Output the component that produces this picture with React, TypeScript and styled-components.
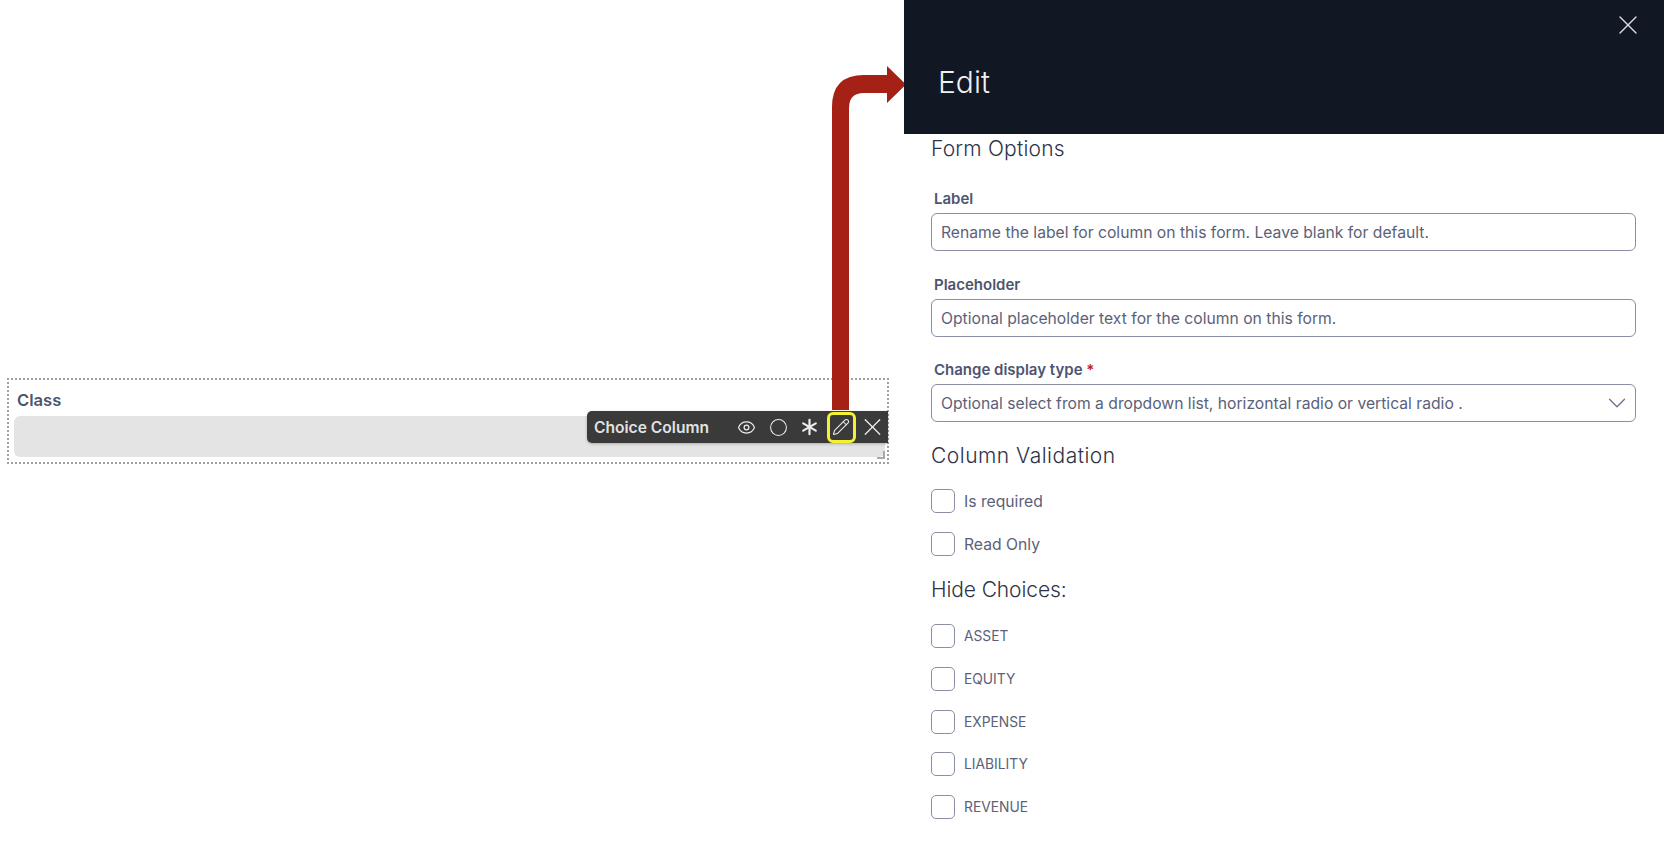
import React from 'react';
import styled, { createGlobalStyle } from 'styled-components';
import { ChevronDown, X, Eye, Circle, Asterisk, Pencil } from 'lucide-react';

const GlobalStyle = createGlobalStyle`
  html, body {
    margin: 0;
    padding: 0;
    background: #ffffff;
    font-family: 'Inter', 'Open Sans', sans-serif;
  }
  * {
    box-sizing: border-box;
  }
`;

const Page = styled.div`
  position: relative;
  display: flex;
  width: 1680px;
  height: 846px;
  overflow: hidden;
`;

const Canvas = styled.div`
  width: 904px;
  padding: 378px 15px 0 7px;
`;

const ColumnBox = styled.div`
  position: relative;
  height: 86px;
  border: 2px dotted #a0a0a0;
  padding: 10px 2px 0 5px;
`;

const ColumnLabel = styled.div`
  font-size: 16.6px;
  line-height: 20px;
  font-weight: 600;
  color: #4d5571;
  padding-left: 3px;
  margin-bottom: 6px;
`;

const GreyInput = styled.div`
  height: 41px;
  background: #e4e4e4;
  border-radius: 6px;
`;

const ResizeCorner = styled.div`
  position: absolute;
  right: 2px;
  bottom: 3px;
  width: 8px;
  height: 8px;
  border-right: 2px solid #a8a8a8;
  border-bottom: 2px solid #a8a8a8;
`;

const Toolbar = styled.div`
  position: absolute;
  top: 31px;
  right: -1px;
  width: 301px;
  height: 32px;
  display: flex;
  align-items: center;
  background: #3a3a3a;
  border-radius: 5px 0 0 5px;
  box-shadow: 0 1px 3px rgba(0, 0, 0, 0.25);
  padding: 0 1px 0 7px;
  color: #eeeeee;
`;

const ToolbarTitle = styled.div`
  flex: 1;
  font-size: 15.6px;
  font-weight: 600;
  color: #e2e2e2;
  white-space: nowrap;
`;

const ToolButton = styled.div<{ $active?: boolean }>`
  width: 29px;
  height: 31px;
  margin-left: 2.4px;
  display: flex;
  align-items: center;
  justify-content: center;
  border-radius: 6px;
  border: ${props => (props.$active ? '3px solid #f4f22e' : 'none')};
`;

const ArrowOverlay = styled.svg`
  position: absolute;
  left: 825px;
  top: 60px;
`;

const Panel = styled.div`
  width: 760px;
  height: 846px;
  display: flex;
  flex-direction: column;
`;

const PanelHeader = styled.div`
  position: relative;
  flex: none;
  height: 134px;
  background: #111723;
  padding: 62px 0 0 34px;
`;

const PanelTitle = styled.div`
  font-size: 30px;
  line-height: 40px;
  font-weight: 300;
  color: #eef0f5;
`;

const CloseButton = styled.div`
  position: absolute;
  top: 9px;
  right: 20px;
  color: #d8dadf;
  display: flex;
`;

const PanelBody = styled.div`
  padding: 3px 28px 0 27px;
`;

const SectionTitle = styled.div<{ $spacing?: number }>`
  font-size: 21px;
  line-height: 24px;
  font-weight: 300;
  color: #2e3347;
  letter-spacing: ${props => props.$spacing ?? 0}px;
`;

const Field = styled.div<{ $top: number }>`
  margin-top: ${props => props.$top}px;
`;

const FieldLabel = styled.div`
  font-size: 15px;
  line-height: 20px;
  font-weight: 600;
  color: #4d5571;
  padding-left: 3px;
  margin-bottom: 4px;
`;

const Required = styled.span`
  color: #c22020;
`;

const TextBox = styled.div`
  height: 38px;
  border: 1px solid #8a8fa3;
  border-radius: 6px;
  display: flex;
  align-items: center;
  justify-content: space-between;
  padding: 0 9px;
  font-size: 15.7px;
  color: #5b6178;
  white-space: nowrap;
`;

const SelectChevron = styled(ChevronDown)`
  margin-right: -6px;
  color: #6b7085;
`;

const CheckRow = styled.div<{ $upper?: boolean }>`
  display: flex;
  align-items: center;
  gap: 9px;
  height: 24px;
  font-size: ${props => (props.$upper ? '13.8px' : '15.7px')};
  color: #5b6178;
`;

const CheckBox = styled.div`
  width: 24px;
  height: 24px;
  border: 1px solid #8a8fa3;
  border-radius: 5px;
`;

const CheckList = styled.div<{ $top: number; $gap: number }>`
  display: flex;
  flex-direction: column;
  gap: ${props => props.$gap}px;
  margin-top: ${props => props.$top}px;
`;

const SubSection = styled(SectionTitle)<{ $top: number }>`
  margin-top: ${props => props.$top}px;
`;

const fields = [
  { label: 'Label', text: 'Rename the label for column on this form. Leave blank for default.', top: 28 },
  { label: 'Placeholder', text: 'Optional placeholder text for the column on this form.', top: 24 },
];

const validations = ['Is required', 'Read Only'];
const choices = ['ASSET', 'EQUITY', 'EXPENSE', 'LIABILITY', 'REVENUE'];

const App: React.FC = () => {
  return (
    <Page>
      <GlobalStyle />
      <Canvas>
        <ColumnBox>
          <ColumnLabel>Class</ColumnLabel>
          <GreyInput />
          <ResizeCorner />
          <Toolbar>
            <ToolbarTitle>Choice Column</ToolbarTitle>
            <ToolButton><Eye size={19} strokeWidth={1.5} /></ToolButton>
            <ToolButton><Circle size={19} strokeWidth={1.3} /></ToolButton>
            <ToolButton><Asterisk size={30} strokeWidth={1.8} /></ToolButton>
            <ToolButton $active><Pencil size={18} strokeWidth={1.4} /></ToolButton>
            <ToolButton><X size={30} strokeWidth={1} /></ToolButton>
          </Toolbar>
        </ColumnBox>
      </Canvas>
      <ArrowOverlay width="82" height="350" viewBox="0 0 82 350">
        <path
          d="M7 350 V47 Q7 15 39 15 H62 V6 L81 24.5 L62 43 V33 H39 Q24 33 24 48 V350 Z"
          fill="#a52015"
        />
      </ArrowOverlay>
      <Panel>
        <PanelHeader>
          <PanelTitle>Edit</PanelTitle>
          <CloseButton><X size={32} strokeWidth={1} /></CloseButton>
        </PanelHeader>
        <PanelBody>
          <SectionTitle $spacing={0.2}>Form Options</SectionTitle>
          {fields.map(field => (
            <Field key={field.label} $top={field.top}>
              <FieldLabel>{field.label}</FieldLabel>
              <TextBox>{field.text}</TextBox>
            </Field>
          ))}
          <Field $top={23}>
            <FieldLabel>Change display type <Required>*</Required></FieldLabel>
            <TextBox>
              Optional select from a dropdown list, horizontal radio or vertical radio .
              <SelectChevron size={30} strokeWidth={1} />
            </TextBox>
          </Field>
          <SubSection $top={22} $spacing={0.5}>Column Validation</SubSection>
          <CheckList $top={21} $gap={19}>
            {validations.map(item => (
              <CheckRow key={item}><CheckBox />{item}</CheckRow>
            ))}
          </CheckList>
          <SubSection $top={22} $spacing={-0.1}>Hide Choices:</SubSection>
          <CheckList $top={22} $gap={18.75}>
            {choices.map(item => (
              <CheckRow key={item} $upper><CheckBox />{item}</CheckRow>
            ))}
          </CheckList>
        </PanelBody>
      </Panel>
    </Page>
  );
};

export default App;
